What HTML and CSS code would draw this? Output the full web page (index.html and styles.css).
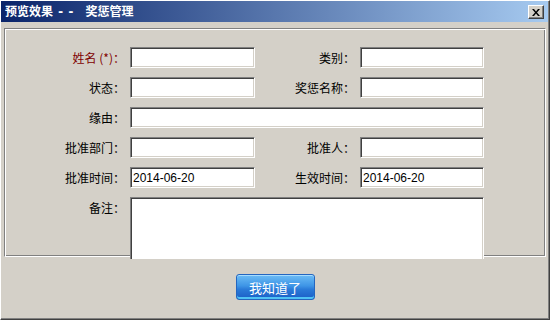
FILE: index.html
```html
<!DOCTYPE html>
<html lang="zh-CN">
  <head>
    <meta charset="UTF-8" />
    <title>预览效果 -- 奖惩管理</title>
    <link rel="stylesheet" href="styles.css">
  </head>
  <body>
    <div class="window">
      <div class="titlebar">
        <span class="title">预览效果<span class="dash">--</span>奖惩管理</span>
        <button class="close" title="关闭">
          <svg width="8" height="7" viewBox="0 0 8 7">
            <path d="M0 0h2l2 2.5 2-2.5h2L5 3.5 8 7H6L4 4.5 2 7H0l3-3.5z" fill="#000" />
          </svg>
        </button>
      </div>

      <!-- 表单区域 ================================ -->
      <div class="content">
        <div class="panel">
          <div class="form">
            <label class="required">姓名 (*)：</label>
            <input type="text" />
            <label>类别：</label>
            <input type="text" />

            <label>状态：</label>
            <input type="text" />
            <label>奖惩名称：</label>
            <input type="text" />

            <label>缘由：</label>
            <input type="text" class="wide" />

            <label>批准部门：</label>
            <input type="text" />
            <label>批准人：</label>
            <input type="text" />

            <label>批准时间：</label>
            <input type="text" value="2014-06-20" />
            <label>生效时间：</label>
            <input type="text" value="2014-06-20" />

            <label class="top">备注：</label>
            <textarea class="wide"></textarea>
          </div>
        </div>
      </div>

      <div class="footer">
        <button class="ok">我知道了</button>
      </div>
    </div>
  </body>
</html>
```

FILE: styles.css
```css
body {
  margin: 0;
  font-family: "Noto Sans CJK SC", sans-serif;
  font-size: 12px;
  color: #000;
  background-color: #d4d0c8;
}
.window {
  width: 550px;
  height: 320px;
  box-sizing: border-box;
  background-color: #d4d0c8;
  border: 1px solid;
  border-color: #fff #404040 #404040 #fff;
  box-shadow: inset -1px -1px #808080;
  display: flex;
  flex-direction: column;
}
.titlebar {
  height: 21px;
  margin-right: 1px;
  padding: 0 4px;
  display: flex;
  align-items: center;
  justify-content: space-between;
  background: linear-gradient(to right, #0a246a, #a6caf0);
  color: #fff;
}
.title {
  font-weight: bold;
  font-size: 12px;
  line-height: 14px;
}
.dash {
  margin: 0 8px 0 4px;
  letter-spacing: 3px;
  font-family: "DejaVu Sans Mono", monospace;
}
.close {
  width: 16px;
  height: 14px;
  padding: 0;
  margin-top: 1px;
  box-sizing: border-box;
  background-color: #d4d0c8;
  border: 1px solid;
  border-color: #fff #404040 #404040 #fff;
  box-shadow: inset -1px -1px #808080;
  display: flex;
  align-items: center;
  justify-content: center;
}
.close svg {
  display: block;
  margin-top: 1px;
}
.content {
  height: 237px;
  padding: 6px 0 0 3px;
  box-sizing: border-box;
  overflow: hidden;
}
.panel {
  width: 542px;
  height: 229px;
  box-sizing: border-box;
  border: 1px solid;
  border-color: #808080 #fff #fff #808080;
  box-shadow: inset 1px 1px #fff, inset -1px -1px #808080;
  padding-top: 18px;
}
.form {
  display: grid;
  grid-template-columns: 125px 125px 105px 124px;
  grid-auto-rows: 21px;
  row-gap: 9px;
}
.form label {
  text-align: right;
  align-self: center;
  white-space: nowrap;
  padding-right: 5px;
  line-height: 14px;
}
.form label.required {
  color: #800000;
}
.form label.top {
  align-self: start;
  padding-top: 4px;
}
input,
textarea {
  box-sizing: border-box;
  height: 21px;
  margin: 0;
  padding: 1px 2px 0;
  font-family: "Liberation Sans", "Noto Sans CJK SC", sans-serif;
  font-size: 12px;
  background-color: #fff;
  border: 1px solid;
  border-color: #808080 #fff #fff #808080;
  box-shadow: inset 1px 1px #404040, inset -1px -1px #d4d0c8;
  outline: none;
}
.wide {
  grid-column: 2 / 5;
}
textarea {
  height: 80px;
  resize: none;
}
.footer {
  flex: 1;
  display: flex;
  justify-content: center;
  padding-top: 15px;
}
.ok {
  width: 79px;
  height: 26px;
  padding: 0;
  border: 1px solid #2466c0;
  border-radius: 3px;
  background: linear-gradient(to bottom, #6cbcf6 0%, #3e95e6 45%, #2a7ad8 60%, #1b5ec6 100%);
  box-shadow: inset 0 1px #a6dcff, inset 0 -2px #4fc2f4;
  color: #fff;
  font-family: "Noto Sans CJK SC", sans-serif;
  font-size: 13px;
}
```
